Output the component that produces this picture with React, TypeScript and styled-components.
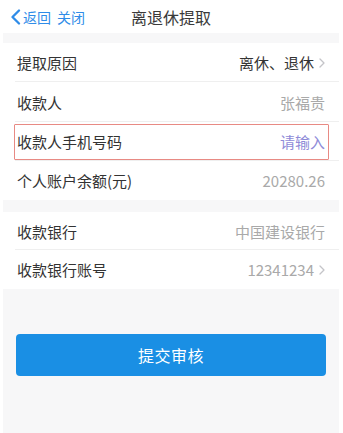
import React from "react";
import styled, { createGlobalStyle } from "styled-components";

const GlobalStyle = createGlobalStyle`
  html, body {
    margin: 0;
    padding: 0;
    background: #ffffff;
  }
  body {
    font-family: "Noto Sans CJK SC", "Noto Sans", "Liberation Sans", sans-serif;
    -webkit-font-smoothing: antialiased;
  }
`;

const Page = styled.div`
  width: 343px;
  height: 433px;
  box-sizing: border-box;
  padding: 0 4px 0 3px;
  overflow: hidden;
  background: #ffffff;
`;

const Screen = styled.div`
  height: 100%;
  display: flex;
  flex-direction: column;
  background: #f7f7f8;
`;

const NavBar = styled.div`
  height: 33px;
  display: flex;
  align-items: center;
  position: relative;
  background: #ffffff;
  padding-left: 7px;
`;

const NavLinks = styled.div`
  display: flex;
  align-items: center;
  gap: 6px;
  color: #2f8ce8;
  font-size: 14px;
  line-height: 1;
`;

const NavLink = styled.span`
  display: flex;
  align-items: center;
  gap: 2px;
`;

const Title = styled.div`
  position: absolute;
  left: 0;
  right: 0;
  top: 0;
  height: 33px;
  display: flex;
  align-items: center;
  justify-content: center;
  font-size: 16px;
  color: #3a3a3a;
  pointer-events: none;
`;

const Gap = styled.div<{ $h: number }>`
  height: ${(p) => p.$h}px;
  flex-shrink: 0;
`;

const Group = styled.div`
  background: #ffffff;
  display: flex;
  flex-direction: column;
`;

const Row = styled.div<{ $h: number; $divider?: boolean; $highlight?: boolean }>`
  height: ${(p) => p.$h}px;
  box-sizing: border-box;
  display: flex;
  align-items: center;
  justify-content: space-between;
  padding: 0 14px 0 14px;
  position: relative;
  font-size: 15px;
  ${(p) =>
    p.$divider
      ? `&::after {
    content: "";
    position: absolute;
    left: 12px;
    right: 0;
    bottom: 0;
    height: 1px;
    background: #efefef;
  }`
      : ""}
  ${(p) =>
    p.$highlight
      ? `&::before {
    content: "";
    position: absolute;
    left: 11px;
    right: 10px;
    top: 2px;
    bottom: 1px;
    border: 1.5px solid #e88a84;
    border-radius: 1px;
    z-index: 1;
  }`
      : ""}
`;

const Label = styled.span`
  color: #333333;
`;

const Value = styled.span<{ $tone: "dark" | "grey" | "hint" }>`
  display: flex;
  align-items: center;
  gap: 5px;
  color: ${(p) =>
    p.$tone === "dark" ? "#333333" : p.$tone === "hint" ? "#8f8bd8" : "#a9a9a9"};
`;

const Chevron = () => (
  <svg width="6" height="10" viewBox="0 0 6 10">
    <polyline
      points="1,1 5,5 1,9"
      fill="none"
      stroke="#c4c4c8"
      strokeWidth="1.3"
      strokeLinecap="round"
      strokeLinejoin="round"
    />
  </svg>
);

const BackChevron = () => (
  <svg width="11" height="16" viewBox="0 0 11 16">
    <polyline
      points="9,1.5 2.5,8 9,14.5"
      fill="none"
      stroke="#2f8ce8"
      strokeWidth="2.3"
      strokeLinecap="round"
      strokeLinejoin="round"
    />
  </svg>
);

const ButtonArea = styled.div`
  padding: 45px 13px 0 13px;
`;

const SubmitButton = styled.button`
  width: 100%;
  height: 42px;
  border: none;
  border-radius: 4px;
  background: #1a8fe4;
  color: #ffffff;
  font-family: "Noto Sans CJK SC", "Noto Sans", sans-serif;
  font-size: 16px;
  letter-spacing: 0.5px;
  display: flex;
  align-items: center;
  justify-content: center;
  cursor: pointer;
`;

type Item = {
  label: string;
  value: string;
  tone: "dark" | "grey" | "hint";
  chevron?: boolean;
  h: number;
  highlight?: boolean;
};

const group1: Item[] = [
  { label: "提取原因", value: "离休、退休", tone: "dark", chevron: true, h: 39 },
  { label: "收款人", value: "张福贵", tone: "grey", h: 40 },
  { label: "收款人手机号码", value: "请输入", tone: "hint", h: 39, highlight: true },
  { label: "个人账户余额(元)", value: "20280.26", tone: "grey", h: 39 },
];

const group2: Item[] = [
  { label: "收款银行", value: "中国建设银行", tone: "grey", h: 38 },
  { label: "收款银行账号", value: "12341234", tone: "grey", chevron: true, h: 39 },
];

const renderGroup = (items: Item[]) => (
  <Group>
    {items.map((it, i) => (
      <Row
        key={it.label}
        $h={it.h}
        $divider={i < items.length - 1}
        $highlight={it.highlight}
      >
        <Label>{it.label}</Label>
        <Value $tone={it.tone}>
          {it.value}
          {it.chevron && <Chevron />}
        </Value>
      </Row>
    ))}
  </Group>
);

export default function App() {
  return (
    <>
      <GlobalStyle />
      <Page>
        <Screen>
          <NavBar>
            <NavLinks>
              <NavLink>
                <BackChevron />
                返回
              </NavLink>
              <NavLink>关闭</NavLink>
            </NavLinks>
            <Title>离退休提取</Title>
          </NavBar>
          <Gap $h={10} />
          {renderGroup(group1)}
          <Gap $h={12} />
          {renderGroup(group2)}
          <ButtonArea>
            <SubmitButton>提交审核</SubmitButton>
          </ButtonArea>
        </Screen>
      </Page>
    </>
  );
}
